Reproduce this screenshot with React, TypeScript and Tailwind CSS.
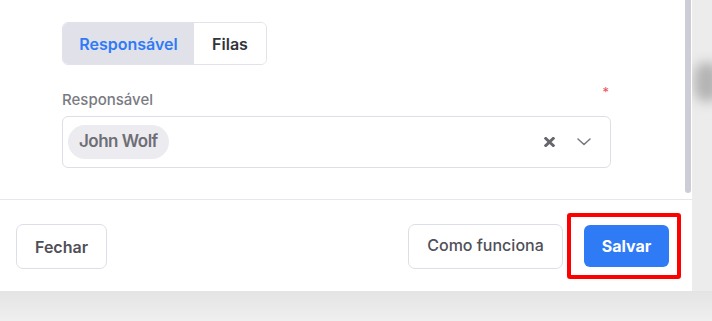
import React from "react";

export default function App() {
  return (
    <div
      className="relative w-[712px] h-[321px] overflow-hidden bg-[#ececec]"
      style={{ fontFamily: "Inter, 'Noto Sans', sans-serif" }}
    >
      {/* blurred background spot at right */}
      <div className="absolute left-[694px] top-[62px] w-[26px] h-[40px] rounded-full bg-[#b4b4b4] blur-[6px]" />
      <div className="absolute left-[0px] top-[291px] w-[712px] h-[30px] bg-gradient-to-b from-[#e4e4e4] to-[#efefef]" />

      <div className="relative w-[692px] h-[291px] bg-white flex flex-col">
        {/* content area */}
        <div className="relative h-[200px] border-b border-[#e6e6ec] pl-[62px] pt-[22px]">
          <div className="absolute right-[1px] top-0 w-[6px] h-[193px] rounded-b-[3px] bg-[#cdcdd6]" />

          <div className="flex w-[205px] h-[43px] rounded-[6px] border border-[#e2e2ea] overflow-hidden">
            <div className="w-[131px] h-full bg-[#e1e1ea] flex items-center justify-center text-[16px] font-semibold text-[#2f7bf6]">
              Responsável
            </div>
            <div className="flex-1 h-full bg-white flex items-center justify-center text-[16px] font-semibold text-[#33333a]">
              Filas
            </div>
          </div>

          <div className="w-[549px] mt-[25px] flex justify-between items-start">
            <div className="text-[15px] leading-[20px] font-medium text-[#7a7a82]">
              Responsável
            </div>
            <span className="text-[13px] leading-[10px] mr-[2px] -mt-[3px] text-[#f0505a]">*</span>
          </div>

          <div className="mt-[6px] w-[549px] h-[52px] rounded-[6px] border border-[#dedee6] flex items-center pl-[5px] pr-[19px]">
            <div className="h-[34px] px-[11px] rounded-full bg-[#ebebf0] flex items-center text-[17px] font-semibold text-[#6e6e76] tracking-[-0.5px]">
              John Wolf
            </div>
            <div className="flex-1" />
            <svg width="11" height="10" viewBox="0 0 11 10" className="mr-[22px]">
              <path d="M1.8 1.5 L9.2 8.5 M9.2 1.5 L1.8 8.5" stroke="#66666c" strokeWidth="3" strokeLinecap="square" />
            </svg>
            <svg width="14" height="8" viewBox="0 0 14 8">
              <path d="M1 1 L7 6.5 L13 1" fill="none" stroke="#7a7a82" strokeWidth="1.6" strokeLinecap="round" strokeLinejoin="round" />
            </svg>
          </div>
        </div>

        {/* footer */}
        <div className="flex items-start pt-[24px] pl-[16px] pr-[23px]">
          <button className="w-[91px] h-[45px] rounded-[7px] border border-[#dedee8] bg-white text-[16px] font-semibold text-[#4f4f58]">
            Fechar
          </button>
          <div className="flex-1" />
          <button className="w-[155px] h-[45px] rounded-[7px] border border-[#dedee8] bg-white text-[16px] font-medium text-[#4f4f58] pb-[4px]">
            Como funciona
          </button>
          <div className="relative ml-[21px] mt-[1px]">
            <button className="w-[85px] h-[42px] rounded-[6px] bg-[#2f7bf6] text-white text-[16px] font-bold">
              Salvar
            </button>
            <div className="absolute -left-[17px] -right-[12px] -top-[12px] -bottom-[12px] border-4 border-[#ff0000] rounded-[3px]" />
          </div>
        </div>
      </div>
    </div>
  );
}
